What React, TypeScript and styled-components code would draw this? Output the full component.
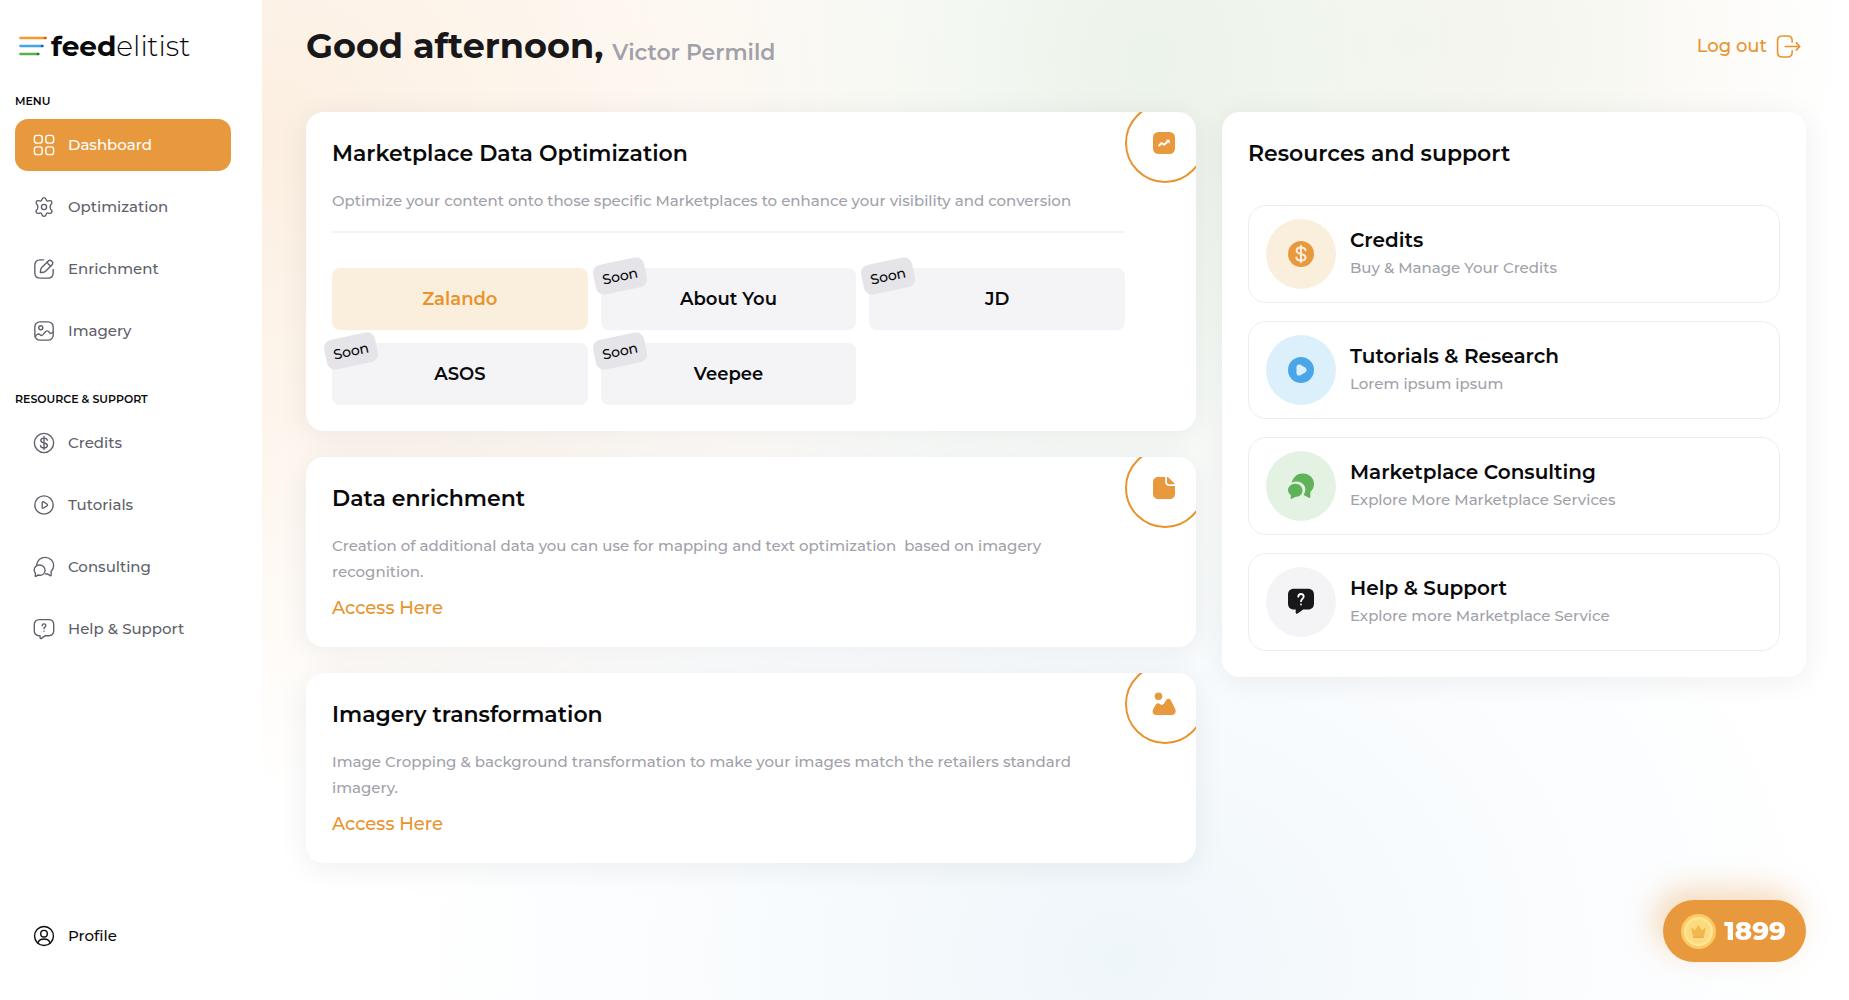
import React from 'react';
import styled, { createGlobalStyle, css } from 'styled-components';

const orange = '#e8993e';
const orangeText = '#e8942e';

const GlobalStyle = createGlobalStyle`
  *, *::before, *::after { box-sizing: border-box; }
  body {
    margin: 0;
    font-family: Montserrat, Inter, "Open Sans", sans-serif;
    color: #09090b;
    background: #fff;
  }
  h1, h2, h3, p, ul { margin: 0; padding: 0; }
  ul { list-style: none; }
  a { color: inherit; text-decoration: none; }
  button { font: inherit; color: inherit; border: 0; background: none; padding: 0; cursor: pointer; }
  svg { display: block; flex: none; }
`;

const Page = styled.div`
  display: grid;
  grid-template-columns: 262px minmax(0, 1fr);
  min-height: 100vh;
`;

const Sidebar = styled.aside`
  display: flex;
  flex-direction: column;
  padding: 28px 31px 38px 15px;
  background: #fff;
`;

const Logo = styled.a`
  display: flex;
  align-items: center;
  gap: 4px;
  height: 36px;
  padding-left: 4px;
  margin-bottom: 27px;
  font-size: 28px;
  line-height: 36px;
  font-weight: 300;
  strong { font-weight: 700; }
`;

const MenuLabel = styled.h2`
  font-size: 11px;
  line-height: 20px;
  font-weight: 600;
  text-transform: uppercase;
`;

const Menu = styled.ul<{ $spaced?: boolean }>`
  display: flex;
  flex-direction: column;
  gap: 10px;
  margin: ${p => (p.$spaced ? '8px 0 32px' : '8px 0 0')};
`;

const MenuLink = styled.a<{ $active?: boolean; $dark?: boolean }>`
  display: flex;
  align-items: center;
  gap: 13px;
  height: 52px;
  padding: 0 18px;
  border-radius: 13px;
  font-size: 15px;
  line-height: 24px;
  font-weight: 500;
  color: ${p => (p.$dark ? '#09090b' : '#5f5f6b')};
  ${p => p.$active && css`
    color: #fff;
    background: ${orange};
  `}
`;

const Bottom = styled.div`
  margin-top: auto;
`;

const Main = styled.main`
  padding: 20px 43px 40px 44px;
  background:
    radial-gradient(ellipse 46% 66% at 0% 14%, #fcefe1 0%, rgba(253, 243, 232, 0.75) 45%, rgba(255, 250, 246, 0) 100%),
    radial-gradient(ellipse 34% 62% at 56% 6%, #ecf3ea 0%, rgba(241, 247, 240, 0.7) 45%, rgba(250, 252, 250, 0) 100%),
    radial-gradient(ellipse 28% 40% at 72% 4%, #f5f2e8 0%, rgba(250, 248, 242, 0) 100%),
    radial-gradient(ellipse 46% 60% at 54% 96%, #eff6fa 0%, rgba(246, 250, 253, 0.7) 50%, rgba(255, 255, 255, 0) 100%),
    #fff;
`;

const Header = styled.header`
  display: flex;
  align-items: center;
  justify-content: space-between;
  height: 52px;
  margin-bottom: 40px;
`;

const Greeting = styled.h1`
  display: flex;
  align-items: flex-end;
  gap: 9px;
  font-size: 35px;
  line-height: 52px;
  font-weight: 700;
  color: #18181b;
`;

const UserName = styled.span`
  font-size: 22px;
  line-height: 38px;
  font-weight: 600;
  color: #a1a1aa;
`;

const LogOut = styled.button`
  display: flex;
  align-items: center;
  gap: 9px;
  padding-right: 5px;
  font-size: 18px;
  line-height: 26px;
  font-weight: 500;
  color: ${orangeText};
`;

const Columns = styled.div`
  display: grid;
  grid-template-columns: minmax(0, 890fr) minmax(0, 584fr);
  gap: 26px;
  align-items: start;
`;

const Stack = styled.div`
  display: flex;
  flex-direction: column;
  gap: 26px;
`;

const Card = styled.section`
  border-radius: 18px;
  background: #fff;
  padding: 26px;
  box-shadow: 0 4px 30px rgba(24, 24, 40, 0.07);
`;

const FeatureCard = styled(Card)`
  position: relative;
  overflow: hidden;
  padding-right: 71px;
`;

const CardTitle = styled.h2`
  font-size: 22px;
  line-height: 32px;
  font-weight: 600;
`;

const CardText = styled.p`
  margin-top: 18px;
  font-size: 15px;
  line-height: 26px;
  font-weight: 500;
  color: #a1a1aa;
`;

const AccessLink = styled.a`
  display: inline-block;
  margin-top: 11px;
  font-size: 18px;
  line-height: 25px;
  font-weight: 500;
  color: ${orangeText};
  vertical-align: top;
`;

const CornerBadge = styled.div`
  position: absolute;
  top: -9px;
  right: -9px;
  display: grid;
  place-items: center;
  width: 80px;
  height: 80px;
  padding-right: 2px;
  border: 2px solid ${orangeText};
  border-radius: 50%;
`;

const Divider = styled.hr`
  height: 2px;
  margin: 17px 0 35px;
  border: 0;
  background: #f4f4f5;
`;

const Markets = styled.div`
  display: grid;
  grid-template-columns: repeat(3, minmax(0, 1fr));
  gap: 13px;
`;

const Market = styled.button<{ $active?: boolean }>`
  position: relative;
  height: 62px;
  border-radius: 8px;
  font-size: 18px;
  line-height: 26px;
  font-weight: 600;
  background: ${p => (p.$active ? '#faeedd' : '#f4f4f6')};
  color: ${p => (p.$active ? orangeText : '#09090b')};
`;

const Soon = styled.span`
  position: absolute;
  top: -7px;
  left: -7px;
  padding: 0 8px;
  border-radius: 8px;
  font-size: 14px;
  line-height: 30px;
  font-weight: 500;
  background: #e4e4e9;
  color: #09090b;
  transform: rotate(-12deg);
`;

const Resources = styled.ul`
  display: flex;
  flex-direction: column;
  gap: 18px;
  margin-top: 35px;
`;

const Resource = styled.a`
  display: flex;
  align-items: center;
  gap: 14px;
  height: 98px;
  padding: 0 17px;
  border: 1px solid #ededf0;
  border-radius: 18px;
`;

const Disc = styled.span<{ $tint: string }>`
  display: grid;
  place-items: center;
  flex: none;
  width: 70px;
  height: 70px;
  border-radius: 50%;
  background: ${p => p.$tint};
`;

const ResourceTitle = styled.h3`
  font-size: 20px;
  line-height: 28px;
  font-weight: 600;
`;

const ResourceText = styled.p`
  font-size: 15px;
  line-height: 28px;
  font-weight: 500;
  color: #a1a1aa;
`;

const Balance = styled.button`
  position: fixed;
  right: 43px;
  bottom: 38px;
  display: flex;
  align-items: center;
  gap: 8px;
  height: 62px;
  padding: 0 20px 0 18px;
  border-radius: 31px;
  font-size: 26px;
  line-height: 36px;
  font-weight: 800;
  color: #fff;
  background: ${orange};
  box-shadow: -8px -10px 30px rgba(232, 153, 62, 0.36);
`;

type IconProps = { size?: number; children: React.ReactNode };

const Line = ({ size = 22, children }: IconProps) => (
  <svg width={size} height={size} viewBox="0 0 24 24" fill="none" stroke="currentColor" strokeWidth="1.5" strokeLinecap="round" strokeLinejoin="round" aria-hidden="true">
    {children}
  </svg>
);

const Solid = ({ size = 28, children }: IconProps) => (
  <svg width={size} height={size} viewBox="0 0 28 28" fill="currentColor" aria-hidden="true">
    {children}
  </svg>
);

const icons = {
  dashboard: (
    <Line>
      <rect x="1.5" y="1.5" width="8.5" height="8.5" rx="2.6" />
      <rect x="14" y="1.5" width="8.5" height="8.5" rx="2.6" />
      <rect x="1.5" y="14" width="8.5" height="8.5" rx="2.6" />
      <rect x="14" y="14" width="8.5" height="8.5" rx="2.6" />
    </Line>
  ),
  optimization: (
    <Line>
      <path d="M9.600 4.100C10 2.500 10.700 1.800 12 1.800s2 .7 2.400 2.300c.3 1.200 1.300 1.700 2.500 1.300 1.700-.6 2.800-.4 3.500.8s.3 2.200-1 3.400c-.9.9-.9 3.900 0 4.800 1.300 1.200 1.700 2.200 1 3.400s-1.800 1.400-3.500.8c-1.200-.4-2.200.1-2.500 1.300-.4 1.600-1.100 2.300-2.400 2.300s-2-.7-2.400-2.300c-.3-1.200-1.300-1.700-2.500-1.300-1.700.6-2.800.4-3.500-.8s-.3-2.200 1-3.400c.9-.9.9-3.900 0-4.800-1.300-1.200-1.700-2.200-1-3.400s1.800-1.400 3.500-.8c1.200.4 2.200-.1 2.500-1.300Z" />
      <circle cx="12" cy="12" r="2.8" />
    </Line>
  ),
  enrichment: (
    <Line>
      <path d="M11.500 2H8C4 2 2 4 2 8v8c0 4 2 6 6 6h8c4 0 6-2 6-6v-3.500" />
      <path d="M16.700 3.200 9.600 10.300c-.6.600-1 1.400-1.200 2.300L8 16l3.400-.4c.9-.2 1.700-.6 2.300-1.200l7.100-7.100c1.100-1.100 1.100-2.500 0-3.600s-3-1.600-4.100-.5Z" />
      <path d="M15.500 4.500c.6 2 2 3.400 4 4" />
    </Line>
  ),
  imagery: (
    <Line>
      <rect x="2" y="2" width="20" height="20" rx="5.500" />
      <circle cx="8.500" cy="8.500" r="2.200" />
      <path d="M2.500 18.500c1.300-3.200 3.700-4 5.300-2.400 1.200 1.200 2.400 1 3.600-.6l1.700-2.200c1.700-2 3.500-1.700 4.600.1.800 1.300 2 1.700 4 .3" />
    </Line>
  ),
  credits: (
    <Line>
      <circle cx="12" cy="12" r="10.500" />
      <path d="M15.600 9c-.2-1.400-1.500-2.300-3.600-2.300S8.500 7.800 8.500 9.300c0 3.700 7.200 1.700 7.200 5.400 0 1.600-1.500 2.600-3.700 2.600s-3.600-1-3.800-2.500M12 4.800v14.400" />
    </Line>
  ),
  tutorials: (
    <Line>
      <circle cx="12" cy="12" r="10" />
      <path d="M10 9.500c0-.9.700-1.300 1.500-.9l3.700 2.300c.9.600.9 1.500 0 2.100l-3.700 2.300c-.8.500-1.500.1-1.500-.8Z" />
    </Line>
  ),
  consulting: (
    <Line>
      <path d="M3.800 9.800C5 4.800 8.700 1.500 13.300 1.500c5.300 0 9.200 4 9.200 8.800 0 2.500-1 4.700-2.700 6.300v4.200c0 .6-.5.900-1 .6l-3.100-1.900c-.6.100-1.500.1-2.200 0" />
      <path d="M7.200 9.800a6 6 0 0 1 6 5.800c0 3.200-2.600 5.400-5.400 5.400-.7 0-1.400-.1-2-.3l-2.700 1.500c-.4.200-.8-.1-.7-.5l.3-2.800a5.600 5.600 0 0 1-1.400-3.700c0-3 2.600-5.400 5.900-5.400Z" />
    </Line>
  ),
  help: (
    <Line>
      <path d="M7 1.800h10c3.500 0 5.600 2.100 5.600 5.600v6.300c0 3.500-2.100 5.600-5.600 5.600h-3.500l-4.300 2.900c-.7.400-1.500 0-1.500-.8v-2.100H7c-3.500 0-5.600-2.100-5.600-5.600V7.400c0-3.500 2.100-5.600 5.600-5.600Z" />
      <path d="M10 8.300c.1-1.200.9-1.900 2-1.900s2 .8 2 1.900c0 1.600-2 1.700-2 3.500M12 14.400v.1" />
    </Line>
  ),
  profile: (
    <Line>
      <circle cx="12" cy="12" r="10.300" />
      <circle cx="12" cy="9.500" r="3.600" />
      <path d="M5.300 19.500c1-2.800 3.500-4.200 6.700-4.200s5.700 1.400 6.700 4.200" />
    </Line>
  ),
};

type Item = { label: string; icon: React.ReactNode; active?: boolean };

const menu: Item[] = [
  { label: 'Dashboard', icon: icons.dashboard, active: true },
  { label: 'Optimization', icon: icons.optimization },
  { label: 'Enrichment', icon: icons.enrichment },
  { label: 'Imagery', icon: icons.imagery },
];

const support: Item[] = [
  { label: 'Credits', icon: icons.credits },
  { label: 'Tutorials', icon: icons.tutorials },
  { label: 'Consulting', icon: icons.consulting },
  { label: 'Help & Support', icon: icons.help },
];

const markets = [
  { name: 'Zalando', ready: true },
  { name: 'About You' },
  { name: 'JD' },
  { name: 'ASOS' },
  { name: 'Veepee' },
];

const resources = [
  {
    title: 'Credits',
    text: 'Buy & Manage Your Credits',
    tint: '#faeedd',
    icon: (
      <Solid>
        <circle cx="14" cy="14" r="13" fill={orange} />
        <path d="M18.500 10.300c-.3-1.700-2-2.700-4.500-2.700s-4.400 1.200-4.400 3.100c0 4.500 9 2.100 9 6.600 0 2-1.900 3.200-4.600 3.200s-4.500-1.200-4.700-3.100M14 5.800v16.400" fill="none" stroke="#faeedd" strokeWidth="2" strokeLinecap="round" />
      </Solid>
    ),
  },
  {
    title: 'Tutorials & Research',
    text: 'Lorem ipsum ipsum',
    tint: '#dcf0fc',
    icon: (
      <Solid>
        <circle cx="14" cy="14" r="13" fill="#4aa6e8" />
        <path d="M9.500 11c0-2.200 2-3.200 4-2.200l4.600 2.700c2 1.300 2 3.700 0 5l-4.600 2.700c-2 1-4 0-4-2.200Z" fill="#dcf0fc" />
      </Solid>
    ),
  },
  {
    title: 'Marketplace Consulting',
    text: 'Explore More Marketplace Services',
    tint: '#e4f2e3',
    icon: (
      <Solid>
        <path d="M5 9.800C6.300 4.800 10.500 1.500 15.800 1.500 22.100 1.500 27 6 27 12c0 3.200-1.400 6-3.700 8v5c0 .9-.7 1.200-1.400.8l-4.700-2.600c-.5-.3-.4-.7-.2-1.100 1.100-1.700 1.500-3.500 1.300-5.500-.5-4.500-4.700-7.500-9.500-7.100-1.200.1-2 .4-3 .9-.5.300-1-.1-.8-.6Z" fill="#5fb257" />
        <path d="M8.200 11.800c4.100 0 7.300 2.900 7.300 6.600s-3.200 6.500-7.300 6.500l-3.300 1.900c-.7.400-1.300 0-1.200-.8l.2-2.700A6.500 6.500 0 0 1 1 18.400c0-3.700 3.200-6.600 7.200-6.600Z" fill="#5fb257" />
      </Solid>
    ),
  },
  {
    title: 'Help & Support',
    text: 'Explore more Marketplace Service',
    tint: '#f4f4f6',
    icon: (
      <Solid>
        <path d="M7 .8h14c3.800 0 6 2.200 6 6v8.700c0 3.800-2.200 6-6 6h-4.800l-5.600 3.900c-1 .6-1.900.1-1.900-1v-2.900H7c-3.800 0-6-2.200-6-6V6.800c0-3.800 2.200-6 6-6Z" fill="#18181b" />
        <path d="M11.300 8.700c.1-1.700 1.100-2.700 2.700-2.700s2.700 1 2.700 2.600c0 2.200-2.700 2.300-2.700 4.700M14 16.500v.1" fill="none" stroke="#fff" strokeWidth="1.800" strokeLinecap="round" />
      </Solid>
    ),
  },
];

const ChartIcon = () => (
  <svg width="22" height="22" viewBox="0 0 22 22" aria-hidden="true">
    <rect width="22" height="22" rx="5.500" fill={orange} />
    <path d="M6.200 13.500 8.600 11l2.600 1.700 3.700-3.500" fill="none" stroke="#fff" strokeWidth="1.900" strokeLinecap="round" strokeLinejoin="round" />
    <path d="M12.700 7.700h4v4Z" fill="#fff" />
  </svg>
);

const NoteIcon = () => (
  <svg width="22" height="22" viewBox="0 0 22 22" fill={orange} aria-hidden="true">
    <path d="M5.500 0h6.700v4.500c0 3 1.300 4.600 4.500 4.600H22v7.400c0 3.500-2 5.500-5.500 5.500h-11C2 22 0 20 0 16.500v-11C0 2 2 0 5.500 0Z" />
    <path d="M14 .3c0-.5.400-.7.800-.4l6.800 6.500c.4.400.2.900-.3.900h-4.500C14.800 7.300 14 6.500 14 4.500Z" />
  </svg>
);

const PictureIcon = () => (
  <svg width="24" height="24" viewBox="0 0 24 24" fill={orange} aria-hidden="true">
    <circle cx="6.500" cy="4.300" r="3.800" />
    <path d="M1.200 17.200l2.200-4c1.300-2.400 3.200-2.300 4.900-.9 1.300 1.100 2.500.9 3.600-.8l2-3c1.500-2.300 3.900-2.200 5.200.2l3.900 7.900c1.600 3.300.1 6.400-3.300 6.400H4.400c-3.300 0-4.700-3-3.200-5.800Z" />
  </svg>
);

const CoinIcon = () => (
  <svg width="35" height="35" viewBox="0 0 36 36" aria-hidden="true">
    <circle cx="18" cy="18" r="18" fill="#fccb63" />
    <circle cx="18" cy="18" r="13.800" fill="#fddb7c" stroke="#fee79c" strokeWidth="2.200" />
    <path d="m11 14.500 3.500 3L18 12l3.500 5.500 3.500-3L23 24H13Z" fill="#f0b94f" stroke="#f0b94f" strokeWidth="1" strokeLinejoin="round" />
    <path d="M13 24h10" stroke="#eda65a" strokeWidth="1.200" strokeLinecap="round" />
  </svg>
);

const LogoLines = () => (
  <svg width="28" height="20" viewBox="0 0 28 20" strokeWidth="2.600" strokeLinecap="round" aria-hidden="true">
    <path d="M1.500 2h24" stroke="#f39a2c" /><path d="M26 2h.5" stroke="#e0521c" />
    <path d="M1.500 10h21" stroke="#43a6ea" /><path d="M23 10h.5" stroke="#1d62c9" />
    <path d="M1.500 18h17" stroke="#55b24b" /><path d="M19 18h.3" stroke="#1f7a2d" />
  </svg>
);

const MenuItems = ({ items, spaced }: { items: Item[]; spaced?: boolean }) => (
  <Menu $spaced={spaced}>
    {items.map(item => (
      <li key={item.label}>
        <MenuLink href="#" $active={item.active} aria-current={item.active ? 'page' : undefined}>
          {item.icon}
          {item.label}
        </MenuLink>
      </li>
    ))}
  </Menu>
);

export default function App() {
  return (
    <>
      <GlobalStyle />
      <Page>
        <Sidebar>
          <Logo href="#">
            <LogoLines />
            <span><strong>feed</strong>elitist</span>
          </Logo>
          <nav>
            <MenuLabel>Menu</MenuLabel>
            <MenuItems items={menu} spaced />
            <MenuLabel>Resource &amp; Support</MenuLabel>
            <MenuItems items={support} />
          </nav>
          <Bottom>
            <MenuLink href="#" $dark>
              {icons.profile}
              Profile
            </MenuLink>
          </Bottom>
        </Sidebar>
        <Main>
          <Header>
            <Greeting>
              Good afternoon, <UserName>Victor Permild</UserName>
            </Greeting>
            <LogOut type="button">
              Log out
              <Line size={25}>
                <path d="M15.500 8V6.500c0-3-1.500-4.500-4.500-4.500H6C3 2 1.500 3.500 1.500 6.500v11C1.500 20.500 3 22 6 22h5c3 0 4.500-1.500 4.500-4.500V16" />
                <path d="M9 12h13.500M19.500 8.500 22.800 12l-3.300 3.500" />
              </Line>
            </LogOut>
          </Header>
          <Columns>
            <Stack>
              <FeatureCard>
                <CornerBadge><ChartIcon /></CornerBadge>
                <CardTitle>Marketplace Data Optimization</CardTitle>
                <CardText>Optimize your content onto those specific Marketplaces to enhance your visibility and conversion</CardText>
                <Divider />
                <Markets>
                  {markets.map(m => (
                    <Market key={m.name} type="button" $active={m.ready}>
                      {!m.ready && <Soon>Soon</Soon>}
                      {m.name}
                    </Market>
                  ))}
                </Markets>
              </FeatureCard>
              <FeatureCard>
                <CornerBadge><NoteIcon /></CornerBadge>
                <CardTitle>Data enrichment</CardTitle>
                <CardText>Creation of additional data you can use for mapping and text optimization &nbsp;based on imagery recognition.</CardText>
                <AccessLink href="#">Access Here</AccessLink>
              </FeatureCard>
              <FeatureCard>
                <CornerBadge><PictureIcon /></CornerBadge>
                <CardTitle>Imagery transformation</CardTitle>
                <CardText>Image Cropping &amp; background transformation to make your images match the retailers standard imagery.</CardText>
                <AccessLink href="#">Access Here</AccessLink>
              </FeatureCard>
            </Stack>
            <Card>
              <CardTitle>Resources and support</CardTitle>
              <Resources>
                {resources.map(r => (
                  <li key={r.title}>
                    <Resource href="#">
                      <Disc $tint={r.tint}>{r.icon}</Disc>
                      <div>
                        <ResourceTitle>{r.title}</ResourceTitle>
                        <ResourceText>{r.text}</ResourceText>
                      </div>
                    </Resource>
                  </li>
                ))}
              </Resources>
            </Card>
          </Columns>
        </Main>
      </Page>
      <Balance type="button" aria-label="1899 credits">
        <CoinIcon />
        1899
      </Balance>
    </>
  );
}
